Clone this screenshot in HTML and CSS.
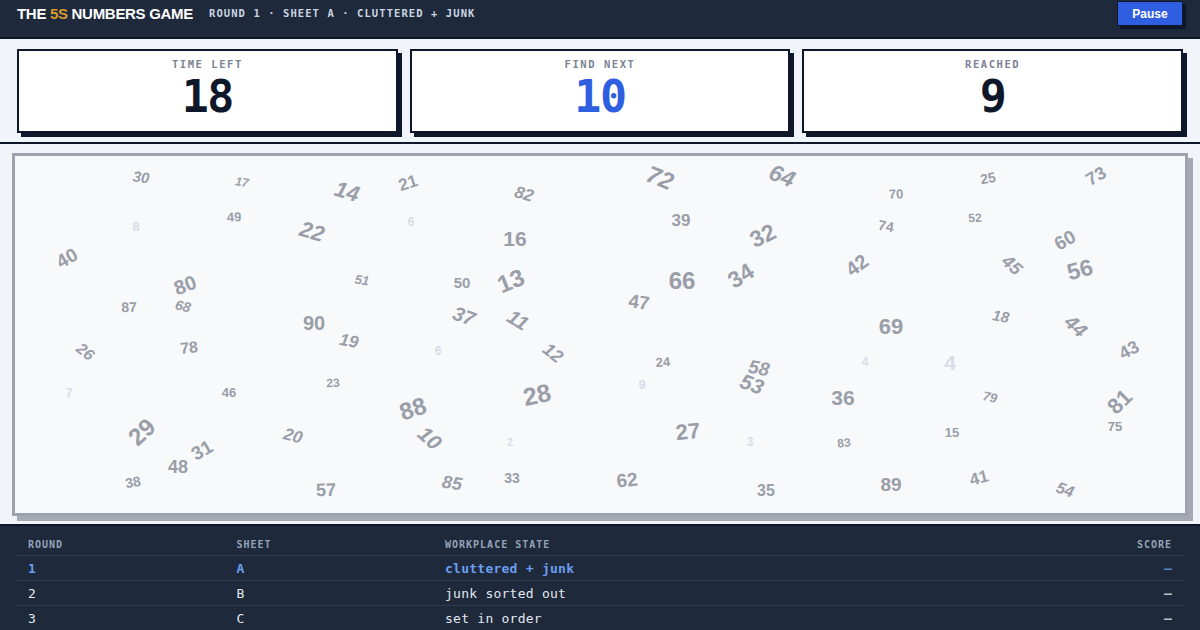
FILE: index.html
```html
<!DOCTYPE html>
<html lang="en">
<head>
  <meta charset="UTF-8">
  <title>The 5S Numbers Game</title>
  <link rel="stylesheet" href="styles.css">
</head>
<body>
  <header class="topbar">
    <div class="brand">THE <span class="brand-accent">5S</span> NUMBERS GAME</div>
    <div class="round-info">ROUND 1 · SHEET A · CLUTTERED + JUNK</div>
    <button class="pause-btn">Pause</button>
  </header>

  <section class="stats">
    <div class="stat">
      <div class="stat-label">TIME LEFT</div>
      <div class="stat-value">18</div>
    </div>
    <div class="stat">
      <div class="stat-label">FIND NEXT</div>
      <div class="stat-value stat-next">10</div>
    </div>
    <div class="stat">
      <div class="stat-label">REACHED</div>
      <div class="stat-value">9</div>
    </div>
  </section>

  <main class="board-wrap">
    <div class="board" id="board"></div>
  </main>

  <section class="rounds">
    <div class="round-row round-head">
      <span>ROUND</span><span>SHEET</span><span>WORKPLACE STATE</span><span class="score">SCORE</span>
    </div>
    <div class="round-row round-current">
      <span>1</span><span>A</span><span>cluttered + junk</span><span class="score score-dash">—</span>
    </div>
    <div class="round-row">
      <span>2</span><span>B</span><span>junk sorted out</span><span class="score score-dash">—</span>
    </div>
    <div class="round-row">
      <span>3</span><span>C</span><span>set in order</span><span class="score score-dash">—</span>
    </div>
  </section>

  <script>
    // number, center x, center y (page coords), font size, rotation, style
    // style: "i" italic, "f" faded junk digit
    const numbers = [
      [30, 141, 177, 15, 6, "i"], [17, 242, 182, 12, 9, "i"], [14, 347, 192, 22, 16, "i"],
      [21, 408, 183, 17, -18, ""], [82, 524, 194, 17, 16, "i"], [72, 660, 178, 24, 22, "i"],
      [64, 782, 176, 23, 22, "i"], [70, 896, 194, 13, -3, ""], [25, 988, 178, 14, -10, ""],
      [73, 1096, 176, 18, -30, ""], [8, 136, 226, 13, 0, "f"], [49, 234, 217, 13, -2, ""],
      [22, 312, 232, 22, 16, "i"], [6, 411, 222, 12, 0, "f"], [16, 515, 238, 21, 0, ""],
      [39, 681, 220, 17, 0, ""], [32, 763, 236, 23, -26, ""], [74, 886, 226, 14, 10, ""],
      [52, 975, 218, 12, -3, ""], [60, 1065, 240, 19, -30, ""], [40, 67, 258, 19, -30, ""],
      [80, 185, 285, 20, -20, ""], [51, 362, 280, 13, 8, "i"], [50, 462, 282, 15, 0, ""],
      [13, 511, 281, 24, -22, ""], [66, 682, 281, 24, 0, ""], [34, 741, 276, 23, -32, ""],
      [42, 857, 265, 20, -36, ""], [45, 1012, 265, 18, 42, "i"], [56, 1080, 270, 23, -15, ""],
      [87, 129, 307, 14, -2, ""], [68, 183, 306, 14, 14, "i"], [90, 314, 323, 20, 0, ""],
      [19, 349, 341, 17, 10, "i"], [37, 464, 316, 20, 20, "i"], [11, 518, 320, 20, 32, "i"],
      [47, 639, 302, 19, 8, ""], [69, 891, 327, 22, 0, ""], [18, 1001, 316, 15, 10, "i"],
      [44, 1076, 326, 20, 42, "i"], [26, 85, 352, 16, 38, "i"], [78, 189, 348, 16, -6, ""],
      [6, 438, 351, 12, 0, "f"], [12, 553, 353, 18, 38, "i"], [24, 663, 362, 13, -4, ""],
      [58, 759, 368, 19, 10, "i"], [53, 752, 384, 21, 20, "i"], [4, 865, 362, 12, 0, "f"],
      [4, 950, 362, 21, 0, "f"], [43, 1129, 350, 18, -28, ""], [7, 69, 392, 13, 0, "f"],
      [46, 229, 392, 13, 0, ""], [23, 333, 383, 12, -3, ""], [9, 642, 384, 13, 0, "f"],
      [28, 537, 395, 25, -12, ""], [36, 843, 397, 21, 0, ""], [79, 990, 397, 13, 12, "i"],
      [81, 1120, 402, 22, -45, ""], [88, 413, 409, 24, -18, ""], [29, 142, 432, 24, -42, ""],
      [10, 430, 438, 21, 42, "i"], [2, 510, 442, 11, 0, "f"], [27, 688, 432, 22, -6, ""],
      [3, 750, 442, 12, 0, "f"], [15, 952, 432, 13, 0, ""], [75, 1115, 426, 13, 0, ""],
      [83, 844, 443, 12, -7, ""], [31, 202, 450, 19, -30, ""], [20, 293, 436, 17, 15, "i"],
      [48, 178, 467, 18, 0, ""], [33, 512, 478, 14, 0, ""], [38, 133, 482, 14, -10, ""],
      [62, 627, 480, 19, -6, ""], [85, 452, 483, 18, 8, "i"], [57, 326, 490, 18, -2, ""],
      [35, 766, 491, 16, 0, ""], [89, 891, 484, 19, 0, ""], [41, 979, 478, 17, -14, ""],
      [54, 1065, 490, 16, 20, "i"]
    ];

    const board = document.getElementById("board");
    const box = board.getBoundingClientRect();

    numbers.forEach(([n, x, y, size, rot, style]) => {
      const el = document.createElement("span");
      el.classList.add("num");
      if (style === "i") el.classList.add("num-italic");
      if (style === "f") el.classList.add("num-faded");
      el.textContent = n;
      el.style.left = `${x - box.left - board.clientLeft}px`;
      el.style.top = `${y - box.top - board.clientTop}px`;
      el.style.fontSize = `${size}px`;
      el.style.transform = `translate(-50%, -50%) rotate(${rot}deg)`;
      board.appendChild(el);
    });
  </script>
</body>
</html>
```

FILE: styles.css
```css
* {
  margin: 0;
  padding: 0;
  box-sizing: border-box;
}

body {
  width: 1200px;
  height: 630px;
  overflow: hidden;
  background-color: #f1f5f9;
  font-family: "Liberation Sans", Arial, sans-serif;
}

.topbar {
  height: 39px;
  display: flex;
  align-items: flex-start;
  gap: 16px;
  padding: 1px 17px 0;
  background-color: #1e293b;
  border-bottom: 2px solid #0f172a;
}

.brand {
  margin-top: 4px;
  font-size: 15px;
  font-weight: 700;
  line-height: 17px;
  letter-spacing: -0.3px;
  color: #fff;
}

.brand-accent {
  color: #d99a2b;
}

.round-info {
  margin-top: 5px;
  font-family: "DejaVu Sans Mono", monospace;
  font-size: 10.5px;
  font-weight: 700;
  line-height: 15px;
  letter-spacing: 1.08px;
  color: #cbd5e1;
}

.pause-btn {
  margin-left: auto;
  width: 66px;
  height: 25px;
  border: 1px solid #0f172a;
  background-color: #2f5fe0;
  box-shadow: 3px 3px 0 #0f172a;
  color: #fff;
  font-family: "Liberation Sans", Arial, sans-serif;
  font-size: 12px;
  font-weight: 700;
}

.stats {
  height: 105px;
  display: grid;
  grid-template-columns: repeat(3, 1fr);
  gap: 12px;
  padding: 10px 17px 0;
  border-bottom: 2px solid #0f172a;
}

.stat {
  height: 84px;
  padding-top: 7px;
  background-color: #fff;
  border: 2px solid #0f172a;
  box-shadow: 4px 4px 0 #0f172a;
  text-align: center;
}

.stat-label {
  font-family: "DejaVu Sans Mono", monospace;
  font-size: 10.5px;
  font-weight: 700;
  line-height: 13px;
  letter-spacing: 1.55px;
  color: #7a8294;
}

.stat-value {
  margin-top: 2px;
  font-family: "DejaVu Sans Mono", monospace;
  font-size: 45px;
  font-weight: 700;
  line-height: 48px;
  letter-spacing: -1.4px;
  color: #0f172a;
}

.stat-next {
  color: #2f5fe0;
}

.board-wrap {
  height: 380px;
  padding: 9px 12px 0;
}

.board {
  position: relative;
  height: 363px;
  background-color: #f8f9fb;
  border: 3px solid #9ca3af;
  box-shadow: 5px 5px 0 #a6a9b5;
}

.num {
  position: absolute;
  font-weight: 700;
  line-height: 1;
  white-space: nowrap;
  color: #9a9ea8;
}

.num-italic {
  font-style: italic;
}

.num-faded {
  color: #d9dce8;
}

.rounds {
  height: 106px;
  padding: 7px 17px 0;
  background-color: #1e293b;
  border-top: 2px solid #0f172a;
  font-family: "DejaVu Sans Mono", monospace;
  font-size: 13px;
  letter-spacing: 0.25px;
  color: #e2e8f0;
}

.round-row {
  height: 25px;
  display: grid;
  grid-template-columns: 208.5px 208.5px 1fr 80px;
  align-items: center;
  padding: 0 11px;
  border-top: 1px solid #2e3a4d;
}

.round-head {
  height: 22px;
  border-top: none;
  font-size: 10px;
  font-weight: 700;
  letter-spacing: 1px;
  color: #94a3b8;
}

.round-current {
  font-weight: 700;
  color: #6c9ef0;
}

.score {
  text-align: right;
}

.score-dash {
  font-weight: 700;
  opacity: 0.8;
}
```
